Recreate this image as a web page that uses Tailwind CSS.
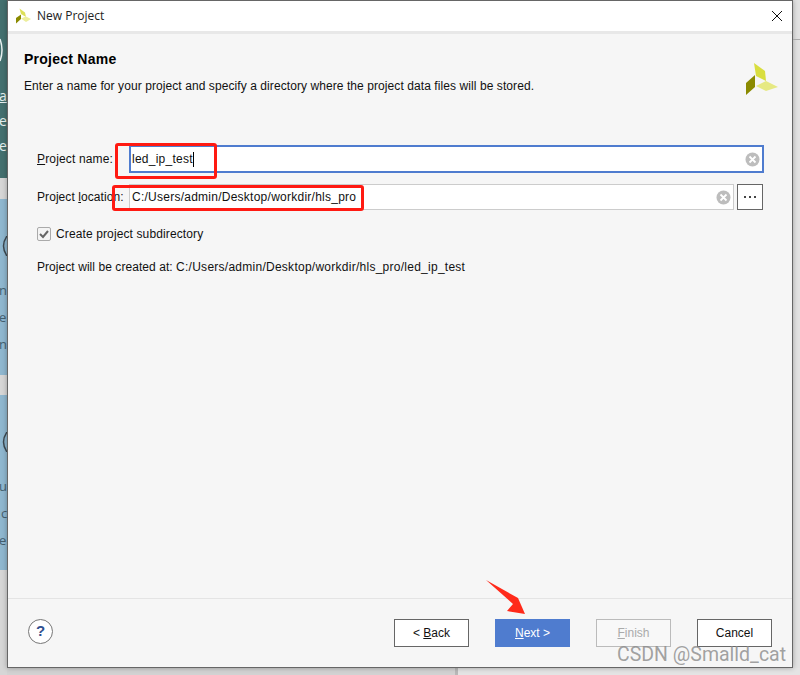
<!DOCTYPE html>
<html>
<head>
    <title>New Project</title>
    <script src="https://cdn.jsdelivr.net/npm/@tailwindcss/browser@4"></script>
</head>
<body class="relative w-[800px] h-[675px] overflow-hidden flex items-start bg-[#e2e2e2] font-['Liberation_Sans',Arial,sans-serif] text-[12px] text-[#111]">

    <!-- bottom of the window behind -->
    <div class="absolute left-0 right-0 bottom-0 h-[7px] flex">
        <div class="w-[455px] bg-[#d2d2d2]"></div>
        <div class="w-[3px] bg-[#b8b8b8]"></div>
        <div class="grow bg-[#e4e4e4]"></div>
    </div>

    <!-- window behind the dialog, only a strip of it shows -->
    <div class="relative w-[7px] h-[675px] shrink-0 flex flex-col overflow-hidden font-['Open_Sans',sans-serif] text-[#e8f0f0]">
        <div class="h-[178px] bg-[#44706f]"></div>
        <div class="h-[21px] bg-[#d6d6d6]"></div>
        <div class="h-[176px] bg-[#8fb7cf]"></div>
        <div class="h-[20px] bg-[#d6d6d6]"></div>
        <div class="h-[175px] bg-[#8fb7cf]"></div>
        <div class="grow bg-[#d6d6d6]"></div>
        <svg class="absolute left-0 top-[38px] w-[7px] h-[24px]" viewBox="0 0 7 24" fill="none" stroke="#e8f0f0" stroke-width="1.5"><path d="M0 1 Q4 12 0 23"/></svg>
        <svg class="absolute left-0 top-[236px] w-[7px] h-[20px]" viewBox="0 0 7 20" fill="none" stroke="#3c4850" stroke-width="1.5"><path d="M7 0 Q0 10 7 20"/></svg>
        <svg class="absolute left-0 top-[432px] w-[7px] h-[20px]" viewBox="0 0 7 20" fill="none" stroke="#3c4850" stroke-width="1.5"><path d="M7 0 Q0 10 7 20"/></svg>
        <span class="absolute left-[-1px] top-[87px] text-[14px] leading-[18px] underline">a</span>
        <span class="absolute left-[-1px] top-[112px] text-[14px] leading-[18px]">e</span>
        <span class="absolute left-[-1px] top-[137px] text-[14px] leading-[18px]">e</span>
        <span class="absolute left-[-1px] top-[281px] text-[13px] text-[#44606f]">n</span>
        <span class="absolute left-[-1px] top-[308px] text-[13px] text-[#44606f]">e</span>
        <span class="absolute left-[-1px] top-[335px] text-[13px] text-[#44606f]">n</span>
        <span class="absolute left-[-1px] top-[477px] text-[13px] text-[#44606f]">u</span>
        <span class="absolute left-[1px] top-[504px] text-[13px] text-[#44606f]">c</span>
        <span class="absolute left-[-1px] top-[531px] text-[13px] text-[#44606f]">e</span>
    </div>

    <!-- dialog -->
    <div class="relative w-[786px] h-[668px] shrink-0 flex flex-col border border-[#666] bg-[#f6f6f6] shadow-[0_0_5px_rgba(0,0,0,0.3)]">
        <div class="h-[33px] shrink-0 flex items-center bg-white border-b-[3px] border-[#e8e8e8]">
            <svg class="ml-[7px] w-[16px] h-[16px]" viewBox="0 0 16 16">
                <polygon points="4.5,0.5 10,4.5 11,9 6,6" fill="#dde05a"/>
                <polygon points="6,10.5 11,8.5 16,11 11,14" fill="#ecee9c"/>
                <polygon points="6,6.5 6,11 1,15.5 1,10" fill="#8a8a00"/>
            </svg>
            <span class="ml-[6px] font-['Open_Sans',sans-serif] text-[12px] text-[#222]">New Project</span>
            <svg class="ml-auto mr-[9px] w-[12px] h-[12px]" viewBox="0 0 12 12" stroke="#111" stroke-width="1" fill="none">
                <path d="M1 1 L11 11 M11 1 L1 11"/>
            </svg>
        </div>

        <div class="grow flex flex-col">
            <div class="relative pl-[16px] pt-[17px]">
                <h1 class="text-[14px] leading-[16px] font-bold tracking-[0.25px] text-black">Project Name</h1>
                <p class="mt-[12px] leading-[14px] text-[12px] tracking-[0.08px]">Enter a name for your project and specify a directory where the project data files will be stored.</p>
                <svg class="absolute right-[13px] top-[28px] w-[34px] h-[34px]" viewBox="0 0 34 34">
                    <polygon points="9,1 20,9 21,19 11,14" fill="#d9de3f"/>
                    <polygon points="11,24 21,19 33,25 21,29" fill="#e6e983"/>
                    <polygon points="10,13 10,25 1,33 1,21" fill="#8a8a00"/>
                </svg>
            </div>

            <div class="pl-[29px] pr-[28px] mt-[52px] flex flex-col">
                <div class="flex items-center h-[28px]">
                    <label class="w-[92px] shrink-0 tracking-[0.15px]"><span class="underline">P</span>roject name:</label>
                    <div class="grow h-[28px] flex items-center bg-white border-2 border-[#4f7ccf] pl-[1px] pr-[2px]">
                        <span class="tracking-[0.25px]">led_ip_test</span>
                        <span class="w-px h-[15px] bg-black"></span>
                        <svg class="ml-auto w-[15px] h-[15px]" viewBox="0 0 15 15">
                            <circle cx="7.5" cy="7.5" r="7" fill="#bdbdbd"/>
                            <path d="M4.5 4.5 L10.5 10.5 M10.5 4.5 L4.5 10.5" stroke="#fff" stroke-width="1.8"/>
                        </svg>
                    </div>
                </div>
                <div class="flex items-center h-[26px] mt-[11px]">
                    <label class="w-[92px] shrink-0 tracking-[0.07px]">Project <span class="underline">l</span>ocation:</label>
                    <div class="w-[605px] h-[26px] flex items-center bg-white border border-[#ccc] pl-[2px] pr-[2px]">
                        <span class="tracking-[0.25px]">C:/Users/admin/Desktop/workdir/hls_pro</span>
                        <svg class="ml-auto w-[15px] h-[15px]" viewBox="0 0 15 15">
                            <circle cx="7.5" cy="7.5" r="7" fill="#bdbdbd"/>
                            <path d="M4.5 4.5 L10.5 10.5 M10.5 4.5 L4.5 10.5" stroke="#fff" stroke-width="1.8"/>
                        </svg>
                    </div>
                    <button class="ml-[3px] w-[26px] h-[26px] bg-white border border-[#666] flex items-center justify-center gap-[3px]">
                        <span class="w-[2px] h-[2px] bg-[#444]"></span>
                        <span class="w-[2px] h-[2px] bg-[#444]"></span>
                        <span class="w-[2px] h-[2px] bg-[#444]"></span>
                    </button>
                </div>
                <div class="flex items-center mt-[17px] h-[14px]">
                    <span class="w-[14px] h-[14px] flex items-center justify-center bg-[#f4f4f4] border border-[#aaa] rounded-[2px]">
                        <svg class="w-[12px] h-[12px]" viewBox="0 0 12 12" fill="none" stroke="#666" stroke-width="2">
                            <path d="M2 6 L5 9 L10 3"/>
                        </svg>
                    </span>
                    <span class="ml-[5px] tracking-[0.12px]">Create project subdirectory</span>
                </div>
                <p class="mt-[19px] leading-[14px] tracking-[0.06px]">Project will be created at: <span class="tracking-[0.26px]">C:/Users/admin/Desktop/workdir/hls_pro/led_ip_test</span></p>
            </div>

            <div class="mt-auto h-[69px] shrink-0 border-t border-[#e4e4e4] flex items-center pl-[20px] pr-[20px] pb-[10px] pt-[10px]">
                <span class="w-[25px] h-[25px] mb-[3px] rounded-full bg-white border border-[#777] flex items-center justify-center text-[15px] font-bold text-[#2f4f8f]">?</span>
                <button class="ml-auto w-[75px] h-[28px] bg-white border border-[#666] text-[12px]">&lt; <span class="underline">B</span>ack</button>
                <button class="ml-[26px] w-[75px] h-[28px] bg-[#4f7ccf] text-white text-[12px]"><span class="underline">N</span>ext &gt;</button>
                <button class="ml-[26px] w-[75px] h-[28px] bg-[#f8f8f8] border border-[#bbb] text-[#aaa] text-[12px]"><span class="underline">F</span>inish</button>
                <button class="ml-[26px] w-[75px] h-[28px] bg-white border border-[#666] text-[12px]">Cancel</button>
            </div>
        </div>
    </div>

    <!-- rest of the window behind, right side -->
    <div class="grow h-[675px] relative">
        <div class="absolute left-0 right-0 top-[39px] h-px bg-[#aaa]"></div>
    </div>

    <!-- annotations drawn over the screenshot -->
    <div class="absolute left-[115px] top-[143px] w-[102px] h-[36px] border-[3px] border-[#ff1a12] rounded-[3px]"></div>
    <div class="absolute left-[112px] top-[185px] w-[252px] h-[26px] border-[3px] border-[#ff1a12] rounded-[3px]"></div>
    <svg class="absolute left-[480px] top-[575px] w-[50px] h-[45px]" viewBox="480 575 50 45">
        <polygon points="486,580 518,598 525,614 507,611 513,604" fill="#ff2a1a"/>
    </svg>
    <span class="absolute left-[617px] top-[643px] whitespace-nowrap text-[19.5px] leading-[24px] font-['Roboto',sans-serif] text-[#8a8a8a]/80">CSDN @Smalld_cat</span>
</body>
</html>
